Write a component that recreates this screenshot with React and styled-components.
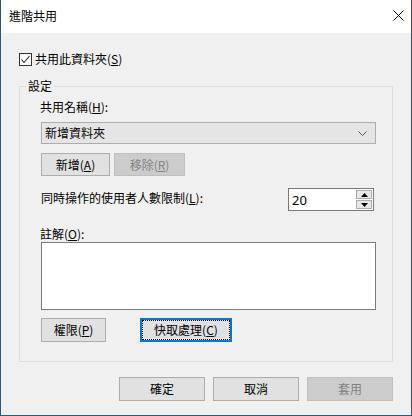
import React from 'react'
import styled, { createGlobalStyle, css } from 'styled-components'

const GlobalStyle = createGlobalStyle`
    html, body {
        margin: 0;
        padding: 0;
        background: #f0f0f0;
    }
    body {
        font-family: "Noto Sans CJK TC", "Noto Sans", sans-serif;
        font-size: 12px;
        line-height: 14px;
        color: #000;
    }
`

const Window = styled.div`
    width: 412px;
    height: 416px;
    box-sizing: border-box;
    border: 1px solid #2d5879;
    border-top: none;
    display: flex;
    flex-direction: column;
    background: #f0f0f0;
`

const TitleBar = styled.div`
    height: 31px;
    flex: none;
    background: #fff;
    display: flex;
    align-items: center;
    justify-content: space-between;
    padding: 0 9px 2px 8px;
`

const Title = styled.span`
    font-size: 12px;
`

const CloseIcon = styled.svg`
    width: 11px;
    height: 11px;
    margin-right: -2px;
`

const Body = styled.div`
    flex: 1;
    display: flex;
    flex-direction: column;
    padding: 19px 18px 0 18px;
`

const CheckRow = styled.label`
    display: flex;
    align-items: center;
    gap: 3px;
    height: 14px;
`

const CheckBox = styled.span`
    width: 11px;
    height: 11px;
    border: 1px solid #333;
    background: #fff;
    display: flex;
    align-items: center;
    justify-content: center;
`

const Group = styled.fieldset`
    margin: 13px 0 0 0;
    padding: 7px 16px 19px 20px;
    border: 1px solid #dcdcdc;
    min-width: 0;
    display: flex;
    flex-direction: column;
`

const Legend = styled.legend`
    padding: 0 2px;
    margin-left: -14px;
    line-height: 14px;
`

const Label = styled.div`
    line-height: 14px;
    margin-top: ${p => p.$top || 0}px;
`

const Combo = styled.div`
    margin-top: 8px;
    margin-left: 1px;
    height: 22px;
    box-sizing: border-box;
    border: 1px solid #adadad;
    background: #e5e5e5;
    display: flex;
    align-items: center;
    justify-content: space-between;
    padding: 0 8px 0 3px;
`

const Row = styled.div`
    display: flex;
    align-items: ${p => p.$align || 'center'};
    gap: ${p => p.$gap || 0}px;
    margin-top: ${p => p.$top || 0}px;
    margin-left: 1px;
    justify-content: ${p => p.$justify || 'flex-start'};
`

const Button = styled.button`
    font: inherit;
    line-height: 14px;
    width: ${p => p.$w}px;
    height: ${p => p.$h || 24}px;
    box-sizing: border-box;
    margin: 0;
    padding: 0;
    border: 1px solid #adadad;
    background: #e1e1e1;
    color: #000;
    ${p => p.disabled && css`
        background: #cccccc;
        border-color: #bfbfbf;
        color: #838383;
    `}
    ${p => p.$focus && css`
        position: relative;
        border: 1px solid #0078d7;
        box-shadow: inset 0 0 0 1px #0078d7;
        &::after {
            content: '';
            position: absolute;
            inset: 1px;
            border: 1px dotted #000;
        }
    `}
`

const SpinWrap = styled.div`
    display: flex;
    width: 86px;
    height: 23px;
    box-sizing: border-box;
    border: 1px solid #7a7a7a;
    background: #fff;
    margin-right: 2px;
`

const SpinValue = styled.div`
    flex: 1;
    display: flex;
    align-items: center;
    padding-left: 3px;
    font-family: "Noto Sans", sans-serif;
    font-size: 13px;
`

const SpinButtons = styled.div`
    width: 16px;
    display: flex;
    flex-direction: column;
    gap: 1px;
    padding: 1px 1px 1px 0;
`

const SpinButton = styled.div`
    flex: 1;
    border: 1px solid #adadad;
    background: #e8e8e8;
    display: flex;
    align-items: center;
    justify-content: center;
`

const Comment = styled.div`
    margin-top: 1px;
    margin-left: 1px;
    height: 68px;
    box-sizing: border-box;
    border: 1px solid #7a7a7a;
    background: #fff;
`

const Footer = styled.div`
    display: flex;
    justify-content: flex-end;
    gap: 8px;
    margin-top: 15px;
`

const Tri = ({ up }) => (
    <svg width="7" height="4" viewBox="0 0 7 4">
        <polygon points={up ? '3.5,0 7,4 0,4' : '0,0 7,0 3.5,4'} fill="#000" />
    </svg>
)

const App = () => {
    return (
        <>
            <GlobalStyle />
            <Window>
                <TitleBar>
                    <Title>進階共用</Title>
                    <CloseIcon viewBox="0 0 11 11">
                        <path d="M0.5 0.5 L10.5 10.5 M10.5 0.5 L0.5 10.5" stroke="#000" strokeWidth="1" fill="none" />
                    </CloseIcon>
                </TitleBar>
                <Body>
                    <CheckRow>
                        <CheckBox>
                            <svg width="11" height="11" viewBox="0 0 11 11">
                                <path d="M1.5 5.5 L4 8.5 L9.5 2" stroke="#222" strokeWidth="1.1" fill="none" />
                            </svg>
                        </CheckBox>
                        <span>共用此資料夾(<u>S</u>)</span>
                    </CheckRow>
                    <Group>
                        <Legend>設定</Legend>
                        <Label>共用名稱(<u>H</u>):</Label>
                        <Combo>
                            <span>新增資料夾</span>
                            <svg width="9" height="5" viewBox="0 0 9 5">
                                <path d="M0.5 0.5 L4.5 4.5 L8.5 0.5" stroke="#555" strokeWidth="1" fill="none" />
                            </svg>
                        </Combo>
                        <Row $top={9} $gap={4}>
                            <Button $w={69} $h={23}>新增(<u>A</u>)</Button>
                            <Button $w={71} $h={23} disabled>移除(<u>R</u>)</Button>
                        </Row>
                        <Row $top={12} $justify="space-between" $align="flex-start">
                            <Label $top={3}>同時操作的使用者人數限制(<u>L</u>):</Label>
                            <SpinWrap>
                                <SpinValue>20</SpinValue>
                                <SpinButtons>
                                    <SpinButton><Tri up /></SpinButton>
                                    <SpinButton><Tri /></SpinButton>
                                </SpinButtons>
                            </SpinWrap>
                        </Row>
                        <Label $top={16}>註解(<u>O</u>):</Label>
                        <Comment />
                        <Row $top={8} $gap={34}>
                            <Button $w={65}>權限(<u>P</u>)</Button>
                            <Button $w={92} $focus>快取處理(<u>C</u>)</Button>
                        </Row>
                    </Group>
                    <Footer>
                        <Button $w={86}>確定</Button>
                        <Button $w={86}>取消</Button>
                        <Button $w={86} disabled>套用</Button>
                    </Footer>
                </Body>
            </Window>
        </>
    )
}

export default App
